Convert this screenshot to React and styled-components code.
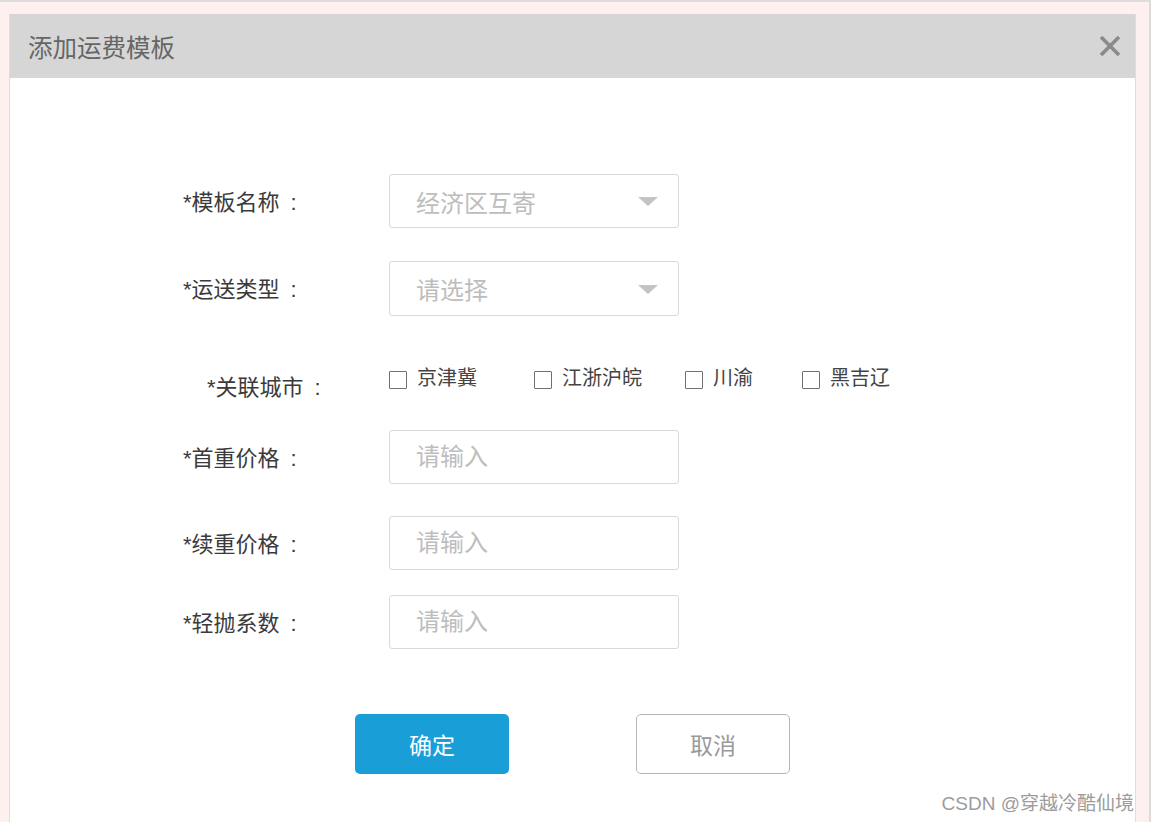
import React from "react";
import styled, { createGlobalStyle } from "styled-components";

const GlobalStyle = createGlobalStyle`
  * { box-sizing: border-box; }
  body {
    margin: 0;
    background: #fff;
    font-family: "Liberation Sans", "Noto Sans CJK SC", sans-serif;
  }
`;

const Page = styled.div`
  position: relative;
  width: 1151px;
  height: 822px;
  overflow: hidden;
  background: #fff0f0;
  border-top: 2px solid #dcdcdc;
  border-right: 2px solid #dcdcdc;
  padding: 12px 0 0 9px;
`;

const Dialog = styled.div`
  width: 1127px;
  height: 840px;
  background: #fff;
  border: 1px solid #dedede;
  border-top: none;
`;

const Header = styled.div`
  height: 64px;
  background: #d6d6d6;
  display: flex;
  align-items: center;
  justify-content: space-between;
  padding: 0 14px 0 18px;
`;

const Title = styled.h2`
  margin: 0;
  font-size: 24.5px;
  font-weight: normal;
  color: #666;
`;

const Close = styled.button`
  border: none;
  background: none;
  padding: 0;
  width: 22px;
  height: 22px;
  display: flex;
  cursor: pointer;
`;

const Form = styled.div`
  padding: 96px 0 0 173px;
`;

const Row = styled.div`
  display: flex;
  align-items: ${(p) => (p.$top ? "flex-start" : "center")};
  height: ${(p) => p.$h || 54}px;
  margin-top: ${(p) => p.$mt || 0}px;
`;

const Label = styled.label`
  width: ${(p) => 206 - (p.$indent || 0)}px;
  margin-left: ${(p) => p.$indent || 0}px;
  padding-top: 3px;
  font-size: 22px;
  line-height: 26px;
  color: #3a3a3a;
  white-space: pre;
`;

const Colon = styled.span`
  margin-left: 11px;
`;

const Field = styled.div`
  position: relative;
  width: 290px;
  height: 100%;
  border: 1px solid #d9d9d9;
  border-radius: 3px;
  display: flex;
  align-items: center;
  padding-left: 26px;
  font-size: 24px;
  color: #bdbdbd;
`;

const Arrow = styled.span`
  position: absolute;
  right: 20px;
  top: 50%;
  margin-top: -4px;
  width: 0;
  height: 0;
  border-left: 10px solid transparent;
  border-right: 10px solid transparent;
  border-top: 9px solid #c4c4c4;
`;

const TextInput = styled.input`
  width: 290px;
  height: 100%;
  border: 1px solid #d9d9d9;
  border-radius: 3px;
  padding: 0 0 0 26px;
  font-family: inherit;
  font-size: 24px;
  color: #333;
  outline: none;
  &::placeholder {
    color: #bdbdbd;
  }
`;

const Checks = styled.div`
  display: flex;
  align-items: center;
  height: 18px;
  margin-top: -1px;
`;

const Check = styled.label`
  display: flex;
  align-items: center;
  width: ${(p) => (p.$w ? `${p.$w}px` : "auto")};
  font-size: 20px;
  line-height: 18px;
  color: #444;
  cursor: pointer;
`;

const CheckText = styled.span`
  position: relative;
  top: -2px;
`;

const Box = styled.span`
  width: 18px;
  height: 18px;
  border: 1.5px solid #707070;
  border-radius: 1px;
  margin-right: 10px;
`;

const Buttons = styled.div`
  display: flex;
  gap: 127px;
  margin-top: 65px;
  padding-left: 345px;
`;

const Button = styled.button`
  width: 154px;
  height: 60px;
  border-radius: 5px;
  font-family: inherit;
  font-size: 23px;
  cursor: pointer;
  background: ${(p) => (p.$primary ? "#199ed8" : "#fff")};
  color: ${(p) => (p.$primary ? "#fff" : "#9a9a9a")};
  border: ${(p) => (p.$primary ? "none" : "1.5px solid #b5b5b5")};
`;

const Watermark = styled.div`
  position: absolute;
  right: 15px;
  bottom: 7px;
  font-size: 19px;
  color: #9c9c9c;
  text-shadow: 0 0 2px #fff;
`;

const cities = [
  { name: "京津冀", w: 145 },
  { name: "江浙沪皖", w: 151 },
  { name: "川渝", w: 117 },
  { name: "黑吉辽" },
];

function FormLabel({ text, indent }) {
  return (
    <Label $indent={indent}>
      {text}
      <Colon>:</Colon>
    </Label>
  );
}

export default function App() {
  return (
    <Page>
      <GlobalStyle />
      <Dialog>
        <Header>
          <Title>添加运费模板</Title>
          <Close aria-label="关闭">
            <svg width="22" height="22" viewBox="0 0 22 22">
              <path d="M2 2 L20 20 M20 2 L2 20" stroke="#8a8a8a" strokeWidth="3.6" />
            </svg>
          </Close>
        </Header>
        <Form>
          <Row>
            <FormLabel text="*模板名称" />
            <Field>
              经济区互寄
              <Arrow />
            </Field>
          </Row>
          <Row $mt={33} $h={55}>
            <FormLabel text="*运送类型" />
            <Field>
              请选择
              <Arrow />
            </Field>
          </Row>
          <Row $mt={56} $h={40} $top>
            <FormLabel text="*关联城市" indent={24} />
            <Checks>
              {cities.map((c) => (
                <Check key={c.name} $w={c.w}>
                  <Box />
                  <CheckText>{c.name}</CheckText>
                </Check>
              ))}
            </Checks>
          </Row>
          <Row $mt={18}>
            <FormLabel text="*首重价格" />
            <TextInput placeholder="请输入" />
          </Row>
          <Row $mt={32}>
            <FormLabel text="*续重价格" />
            <TextInput placeholder="请输入" />
          </Row>
          <Row $mt={25}>
            <FormLabel text="*轻抛系数" />
            <TextInput placeholder="请输入" />
          </Row>
        </Form>
        <Buttons>
          <Button $primary>确定</Button>
          <Button>取消</Button>
        </Buttons>
      </Dialog>
      <Watermark>CSDN @穿越冷酷仙境</Watermark>
    </Page>
  );
}
